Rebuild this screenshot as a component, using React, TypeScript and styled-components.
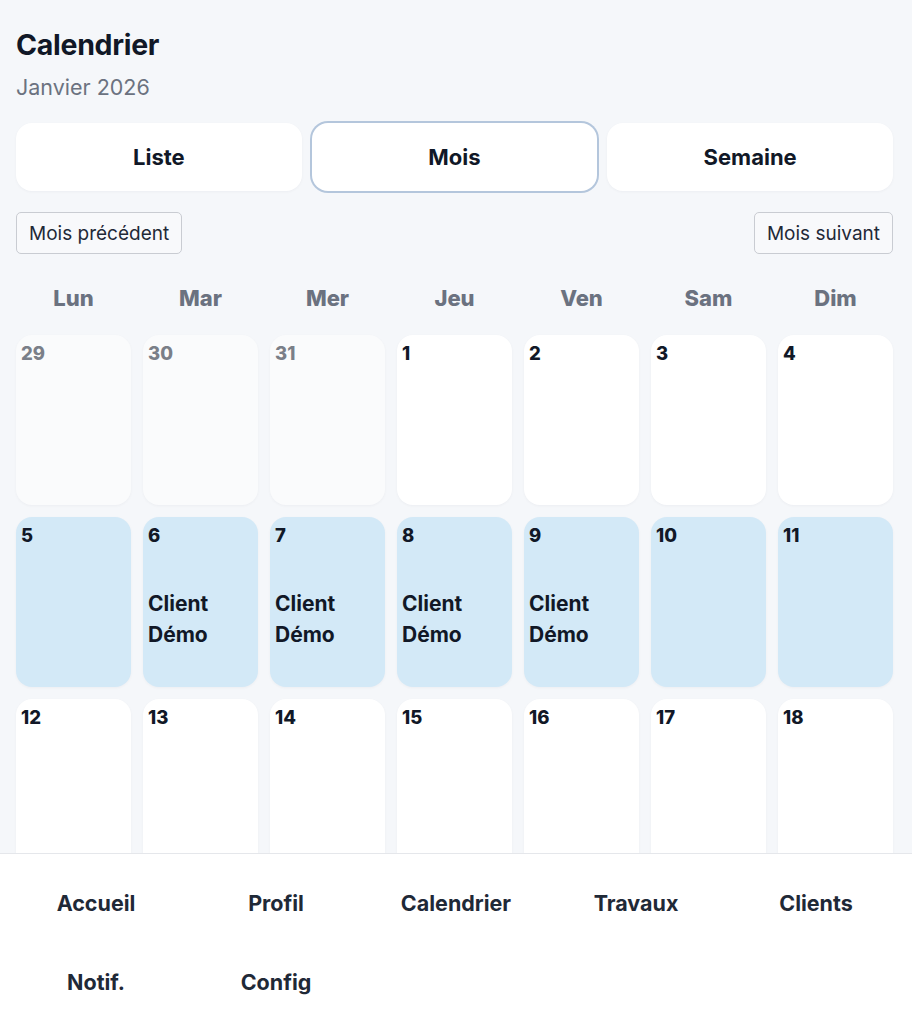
import styled, { createGlobalStyle } from "styled-components";

const GlobalStyle = createGlobalStyle`
  html, body {
    margin: 0;
    padding: 0;
    background: #f5f7fa;
    font-family: Inter, "Noto Sans", "Liberation Sans", sans-serif;
    color: #111827;
  }
  * {
    box-sizing: border-box;
  }
`;

const Page = styled.div`
  padding: 29px 19px 200px 16px;
`;

const Title = styled.h1`
  margin: 0;
  font-size: 28.5px;
  line-height: 32px;
  font-weight: 700;
  color: #111827;
  letter-spacing: -0.3px;
`;

const Subtitle = styled.div`
  margin-top: 14px;
  font-size: 21.5px;
  line-height: 24px;
  color: #6b7280;
`;

const Tabs = styled.div`
  display: grid;
  grid-template-columns: repeat(3, 1fr);
  gap: 10px;
  margin-top: 24px;
`;

const Tab = styled.button<{ $active?: boolean }>`
  height: 68px;
  border: none;
  border-radius: 16px;
  background: #ffffff;
  font-family: inherit;
  font-size: 22px;
  font-weight: 700;
  color: #111827;
  box-shadow: ${(p) =>
    p.$active
      ? "0 0 0 2px #b4c6dc"
      : "0 1px 3px rgba(15, 23, 42, 0.04)"};
`;

const MonthNav = styled.div`
  display: flex;
  justify-content: space-between;
  margin-top: 21px;
`;

const NavButton = styled.button`
  height: 42px;
  padding: 0 12px;
  border: 1px solid #c9ccd2;
  border-radius: 5px;
  background: #f8f9fb;
  font-family: inherit;
  font-size: 19px;
  color: #1f2937;
`;

const WeekHeader = styled.div`
  display: grid;
  grid-template-columns: repeat(7, 1fr);
  gap: 12px;
  margin-top: 30px;
`;

const WeekDay = styled.div`
  text-align: center;
  font-size: 22px;
  line-height: 28px;
  font-weight: 800;
  color: #6b7280;
`;

const Grid = styled.div`
  display: grid;
  grid-template-columns: repeat(7, 1fr);
  gap: 12px;
  margin-top: 23px;
`;

type Kind = "outside" | "normal" | "busy";

const Cell = styled.div<{ $kind: Kind }>`
  height: 170px;
  padding: 7px 5px;
  border-radius: 16px;
  background: ${(p) =>
    p.$kind === "busy" ? "#d3e9f7" : p.$kind === "outside" ? "#fafbfc" : "#ffffff"};
  box-shadow: 0 1px 3px rgba(15, 23, 42, 0.04);
`;

const DayNumber = styled.div<{ $muted?: boolean }>`
  font-size: 18.5px;
  line-height: 22px;
  font-weight: 800;
  color: ${(p) => (p.$muted ? "#7a7f88" : "#111827")};
`;

const Event = styled.div`
  margin-top: 42px;
  font-size: 21px;
  line-height: 31px;
  font-weight: 700;
  color: #111827;
`;

const BottomNav = styled.nav`
  position: fixed;
  left: 0;
  right: 0;
  bottom: 0;
  display: grid;
  grid-template-columns: repeat(5, 1fr);
  row-gap: 9px;
  padding: 14px 6px 7px;
  background: #ffffff;
  border-top: 1px solid #e5e7eb;
`;

const NavItem = styled.a`
  display: flex;
  align-items: center;
  justify-content: center;
  height: 70px;
  font-size: 21.5px;
  font-weight: 700;
  color: #1f2937;
  text-decoration: none;
`;

const weekDays = ["Lun", "Mar", "Mer", "Jeu", "Ven", "Sam", "Dim"];

type Day = { n: number; kind: Kind; event?: string };

const buildDays = (): Day[] => {
  const days: Day[] = [];
  [29, 30, 31].forEach((n) => days.push({ n, kind: "outside" }));
  for (let n = 1; n <= 31; n++) {
    const busy = n >= 5 && n <= 11;
    days.push({
      n,
      kind: busy ? "busy" : "normal",
      event: n >= 6 && n <= 9 ? "Client Démo" : undefined,
    });
  }
  days.push({ n: 1, kind: "outside" });
  return days;
};

const navItems = ["Accueil", "Profil", "Calendrier", "Travaux", "Clients", "Notif.", "Config"];

export default function App() {
  const days = buildDays();
  return (
    <>
      <GlobalStyle />
      <Page>
        <Title>Calendrier</Title>
        <Subtitle>Janvier 2026</Subtitle>

        <Tabs>
          <Tab>Liste</Tab>
          <Tab $active>Mois</Tab>
          <Tab>Semaine</Tab>
        </Tabs>

        <MonthNav>
          <NavButton>Mois précédent</NavButton>
          <NavButton>Mois suivant</NavButton>
        </MonthNav>

        <WeekHeader>
          {weekDays.map((d) => (
            <WeekDay key={d}>{d}</WeekDay>
          ))}
        </WeekHeader>

        <Grid>
          {days.map((d, i) => (
            <Cell key={i} $kind={d.kind}>
              <DayNumber $muted={d.kind === "outside"}>{d.n}</DayNumber>
              {d.event && <Event>{d.event}</Event>}
            </Cell>
          ))}
        </Grid>
      </Page>

      <BottomNav>
        {navItems.map((item) => (
          <NavItem key={item} href="#">
            {item}
          </NavItem>
        ))}
      </BottomNav>
    </>
  );
}
